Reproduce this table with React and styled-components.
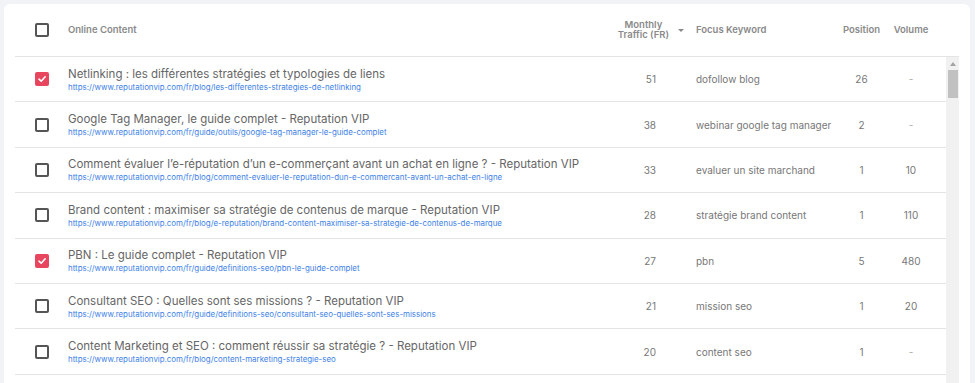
import React from 'react'
import styled, { createGlobalStyle } from 'styled-components'

const rows = [
  {
    id: 1,
    title: 'Netlinking : les différentes stratégies et typologies de liens',
    url: 'https://www.reputationvip.com/fr/blog/les-differentes-strategies-de-netlinking',
    traffic: 51, keyword: 'dofollow blog', position: 26, volume: '-', checked: true,
  },
  {
    id: 2,
    title: 'Google Tag Manager, le guide complet - Reputation VIP',
    url: 'https://www.reputationvip.com/fr/guide/outils/google-tag-manager-le-guide-complet',
    traffic: 38, keyword: 'webinar google tag manager', position: 2, volume: '-',
  },
  {
    id: 3,
    title: 'Comment évaluer l’e-réputation d’un e-commerçant avant un achat en ligne ? - Reputation VIP',
    url: 'https://www.reputationvip.com/fr/blog/comment-evaluer-le-reputation-dun-e-commercant-avant-un-achat-en-ligne',
    traffic: 33, keyword: 'evaluer un site marchand', position: 1, volume: '10',
  },
  {
    id: 4,
    title: 'Brand content : maximiser sa stratégie de contenus de marque - Reputation VIP',
    url: 'https://www.reputationvip.com/fr/blog/e-reputation/brand-content-maximiser-sa-strategie-de-contenus-de-marque',
    traffic: 28, keyword: 'stratégie brand content', position: 1, volume: '110',
  },
  {
    id: 5,
    title: 'PBN : Le guide complet - Reputation VIP',
    url: 'https://www.reputationvip.com/fr/guide/definitions-seo/pbn-le-guide-complet',
    traffic: 27, keyword: 'pbn', position: 5, volume: '480', checked: true,
  },
  {
    id: 6,
    title: 'Consultant SEO : Quelles sont ses missions ? - Reputation VIP',
    url: 'https://www.reputationvip.com/fr/guide/definitions-seo/consultant-seo-quelles-sont-ses-missions',
    traffic: 21, keyword: 'mission seo', position: 1, volume: '20',
  },
  {
    id: 7,
    title: 'Content Marketing et SEO : comment réussir sa stratégie ? - Reputation VIP',
    url: 'https://www.reputationvip.com/fr/blog/content-marketing-strategie-seo',
    traffic: 20, keyword: 'content seo', position: 1, volume: '-',
  },
]

function Checkbox({ checked }) {
  return (
    <Box $checked={checked}>
      {checked && (
        <svg width="10" height="10" viewBox="0 0 10 10">
          <path d="M2 5.2 L4.2 7.2 L8.2 2.8" fill="none" stroke="#fff" strokeWidth="1.6" strokeLinecap="round" strokeLinejoin="round" />
        </svg>
      )}
    </Box>
  )
}

function App() {
  return (
    <>
      <GlobalStyle />
      <Card>
        <HeaderRow>
          <CheckCell><Checkbox /></CheckCell>
          <HeadLabel>Online Content</HeadLabel>
          <TrafficHead>
            <HeadLabel $center>Monthly<br />Traffic (FR)</HeadLabel>
            <SortCaret />
          </TrafficHead>
          <HeadLabel>Focus Keyword</HeadLabel>
          <HeadLabel $center>Position</HeadLabel>
          <HeadLabel $center $pr={12}>Volume</HeadLabel>
        </HeaderRow>
        <Body>
          <List>
            {rows.map((row) => (
              <Row key={row.id}>
                <CheckCell><Checkbox checked={row.checked} /></CheckCell>
                <TitleCell>
                  <Title>{row.title}</Title>
                  <Url>{row.url}</Url>
                </TitleCell>
                <Value $align="right" $pr={40}>{row.traffic}</Value>
                <Value>{row.keyword}</Value>
                <Value $align="center">{row.position}</Value>
                <Value $align="center" $pr={12} $muted={row.volume === '-'}>{row.volume}</Value>
              </Row>
            ))}
          </List>
          <ScrollRail>
            <ScrollArrow />
            <ScrollThumb />
          </ScrollRail>
        </Body>
      </Card>
    </>
  )
}

const GlobalStyle = createGlobalStyle`
  html, body {
    margin: 0;
    height: 100%;
    overflow: hidden;
    background: #f1f3f7;
    font-family: Inter, "Noto Sans", sans-serif;
  }
`

const Card = styled.div`
  margin: 4px 5px 0 4px;
  height: 379px;
  background: #fff;
  border-radius: 6px 6px 0 0;
  padding: 0 11px;
  overflow: hidden;
`

const cols = '53px 532px 96px 139px 53px 58px'

const HeaderRow = styled.div`
  display: grid;
  grid-template-columns: ${cols} 13px;
  align-items: center;
  height: 52px;
  border-bottom: 1px solid #e4e4e4;
`

const HeadLabel = styled.div`
  font-size: 9.5px;
  font-weight: 600;
  color: #8a8a8a;
  line-height: 10px;
  text-align: ${(p) => (p.$center ? 'center' : 'left')};
  padding-right: ${(p) => p.$pr || 0}px;
`

const TrafficHead = styled.div`
  display: flex;
  align-items: center;
  justify-content: flex-end;
  gap: 9px;
  padding-right: 12px;
`

const SortCaret = styled.span`
  width: 0;
  height: 0;
  border-left: 3px solid transparent;
  border-right: 3px solid transparent;
  border-top: 3px solid #8a8a8a;
`

const Body = styled.div`
  display: flex;
`

const List = styled.div`
  width: 931px;
`

const Row = styled.div`
  display: grid;
  grid-template-columns: ${cols};
  align-items: center;
  height: 44.4px;
  border-bottom: 1px solid #e4e4e4;
`

const CheckCell = styled.div`
  display: flex;
  padding-left: 20px;
`

const Box = styled.span`
  box-sizing: border-box;
  width: 14px;
  height: 14px;
  border-radius: 2px;
  border: ${(p) => (p.$checked ? 'none' : '2px solid #555')};
  background: ${(p) => (p.$checked ? '#e8455f' : '#fff')};
  display: flex;
  align-items: center;
  justify-content: center;
`

const TitleCell = styled.div`
  display: flex;
  flex-direction: column;
  gap: 1px;
  min-width: 0;
`

const Title = styled.div`
  font-size: 11.5px;
  color: #666;
  line-height: 15px;
  white-space: nowrap;
`

const Url = styled.div`
  font-size: 7.9px;
  color: #3d7fe8;
  line-height: 9px;
  white-space: nowrap;
`

const Value = styled.div`
  font-size: 10px;
  color: ${(p) => (p.$muted ? '#aaa' : '#777')};
  text-align: ${(p) => p.$align || 'left'};
  padding-right: ${(p) => p.$pr || 0}px;
  white-space: nowrap;
`

const ScrollRail = styled.div`
  width: 13px;
  height: 330px;
  background: #f1f1f1;
  display: flex;
  flex-direction: column;
  align-items: center;
`

const ScrollArrow = styled.span`
  margin-top: 5px;
  width: 0;
  height: 0;
  border-left: 3.5px solid transparent;
  border-right: 3.5px solid transparent;
  border-bottom: 4px solid #a3a3a3;
`

const ScrollThumb = styled.span`
  margin-top: 4px;
  width: 10px;
  height: 28px;
  background: #c1c1c1;
`

export default App
